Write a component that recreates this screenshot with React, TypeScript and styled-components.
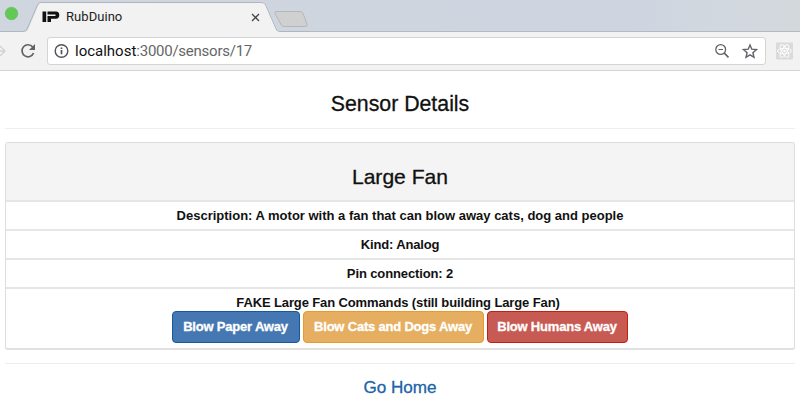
import React from "react";
import styled, { createGlobalStyle } from "styled-components";

const GlobalStyle = createGlobalStyle`
  * { box-sizing: border-box; }
  html, body { margin: 0; background: #fff; }
  body { overflow: hidden; font-family: "Liberation Sans", Arial, sans-serif; color: #111; }
`;

const Window = styled.div`
  width: 800px;
  height: 411px;
  overflow: hidden;
  background: #fff;
`;

const TabStrip = styled.div`
  display: flex;
  height: 32px;
  background: linear-gradient(90deg, #cfd6df 0%, #cfd5e0 80%, #d2d8df 90%, #d2d8dc 100%);
`;

const TabShape = styled.div`
  position: relative;
  width: 310px;
  height: 32px;
`;

const TabOutline = styled.svg`
  position: absolute;
  inset: 0;
`;

const StripLine = styled.div`
  flex: 1;
  border-bottom: 1px solid #b4bac2;
`;

const TabContent = styled.div`
  position: relative;
  display: flex;
  align-items: center;
  height: 34px;
  padding-left: 42px;
`;

const TabTitle = styled.span`
  width: 185px;
  margin-left: 6px;
  font: 13px/18px Roboto, sans-serif;
  letter-spacing: 0.05px;
  color: #222;
`;

const Toolbar = styled.div`
  display: flex;
  align-items: center;
  height: 39px;
  background: #f2f2f2;
  border-bottom: 1px solid #d5d5d5;
`;

const ForwardIcon = styled.svg`
  width: 20px;
  height: 18px;
`;

const Address = styled.div`
  display: flex;
  align-items: center;
  width: 719px;
  height: 28px;
  margin-left: 10px;
  padding: 0 7px 0 6px;
  background: #fff;
  border: 1px solid #d4d4d4;
  border-radius: 3px;
`;

const Url = styled.div`
  flex: 1;
  margin-left: 5px;
  font: 15px/20px Roboto, sans-serif;
  letter-spacing: -0.25px;
  color: #666;
`;

const Host = styled.span`
  letter-spacing: 0;
  color: #111;
`;

const Page = styled.main`
  display: flex;
  flex-direction: column;
  padding: 0 5px;
`;

const Title = styled.h1`
  margin: 0;
  height: 58px;
  padding-top: 20px;
  border-bottom: 1px solid #eee;
  font-size: 21.3px;
  line-height: 26px;
  font-weight: 400;
  text-align: center;
  -webkit-text-stroke: 0.3px #111;
`;

const Panel = styled.section`
  height: 208px;
  margin-top: 13px;
  border: 1px solid #ddd;
  border-bottom: 2px solid #e0e0e0;
  border-radius: 3px;
  overflow: hidden;
`;

const PanelHeading = styled.h2`
  margin: 0;
  height: 57px;
  padding-top: 21px;
  background: #f4f4f4;
  font-size: 21.1px;
  line-height: 26px;
  font-weight: 400;
  text-align: center;
  -webkit-text-stroke: 0.3px #111;
`;

const Row = styled.div<{ $tracking?: number }>`
  height: 29px;
  border-top: 2px solid #e6e6e6;
  font-size: 13px;
  line-height: 27px;
  font-weight: 700;
  letter-spacing: ${({ $tracking = 0 }) => $tracking}px;
  text-align: center;
`;

const Commands = styled(Row)`
  height: 62px;
`;

const CommandTitle = styled.div`
  height: 22px;
  padding-right: 4px;
  letter-spacing: -0.12px;
`;

const Buttons = styled.div`
  display: flex;
  justify-content: center;
  gap: 3px;
  padding-right: 1px;
`;

const Button = styled.button<{ $fill: string; $edge: string; $width: number }>`
  width: ${({ $width }) => $width}px;
  height: 32px;
  padding: 0;
  border: 1px solid ${({ $edge }) => $edge};
  border-radius: 4px;
  background: ${({ $fill }) => $fill};
  color: #fff;
  font: 700 13px/30px "Liberation Sans", Arial, sans-serif;
  letter-spacing: -0.2px;
  white-space: nowrap;
  -webkit-text-stroke: 0.3px #fff;
`;

const Footer = styled.footer`
  margin-top: 13px;
  padding-top: 13px;
  border-top: 1px solid #eee;
  text-align: center;
`;

const HomeLink = styled.a`
  color: #1c63a8;
  font-size: 17.1px;
  line-height: 22px;
  -webkit-text-stroke: 0.3px #1c63a8;
`;

const details = [
  { text: "Description: A motor with a fan that can blow away cats, dog and people", tracking: 0 },
  { text: "Kind: Analog", tracking: -0.15 },
  { text: "Pin connection: 2", tracking: -0.12 },
];

const commands = [
  { label: "Blow Paper Away", fill: "#4578b2", edge: "#145a9c", width: 128 },
  { label: "Blow Cats and Dogs Away", fill: "#e6ae60", edge: "#e89b2b", width: 181 },
  { label: "Blow Humans Away", fill: "#c75a53", edge: "#c4200f", width: 141 },
];

export default function App() {
  return (
    <>
      <GlobalStyle />
      <Window>
        <TabStrip>
          <TabShape>
            <TabOutline width="310" height="32">
              <path d="M0 31.5H23Q26 31.5 27 29L37 6Q38.5 2.5 41 2.5H261Q264 2.5 265.500 5L276 29Q277 31.500 280 31.500H310" fill="none" stroke="#b0b6be" />
              <path d="M24 32Q27 32 28 29.500L38 6Q39 3 41 3H261Q264 3 265 5L276 30Q277 32 280 32Z" fill="#f2f2f2" />
              <circle cx="11.500" cy="13.500" r="6.300" fill="#62c955" stroke="#52b84a" strokeWidth=".5" />
              <path d="M277 11.500H300Q302 11.500 303 13.500L307 24Q308 26.500 305 26.500H284Q282 26.500 281 24.500L275 13.500Q274 11.500 277 11.500Z" fill="#d0d0d0" stroke="#b3b7bd" />
            </TabOutline>
            <TabContent>
              <svg width="18" height="12" viewBox="0 0 18 12">
                <path d="M.5.500h3.700v10.500H.5zM5.500.500h8.500q3.300 0 3.300 3.600T14 7.700H9V11H5.500V5h8V3.500h-8z" fill="#111" />
              </svg>
              <TabTitle>RubDuino</TabTitle>
              <svg width="9" height="9" viewBox="0 0 9 9">
                <path d="m1 1 7 7M8 1 1 8" stroke="#444" strokeWidth="1.300" />
              </svg>
            </TabContent>
          </TabShape>
          <StripLine />
        </TabStrip>
        <Toolbar>
          <ForwardIcon viewBox="0 0 20 18">
            <path d="M0 4l5 5-5 5M0 9h5" fill="none" stroke="#d2d2d2" strokeWidth="1.300" />
          </ForwardIcon>
          <svg width="17" height="18" viewBox="0 0 17 18">
            <path d="M12.700 5A6 6 0 1 0 13.600 11" fill="none" stroke="#606268" strokeWidth="1.700" />
            <path d="M15 2v6H9z" fill="#606268" />
          </svg>
          <Address>
            <svg width="16" height="16" viewBox="0 0 16 16">
              <circle cx="7.500" cy="8" r="6.300" fill="none" stroke="#50535a" strokeWidth="1.400" />
              <path d="M7.500 7v4.200M7.500 4.500V6" stroke="#50535a" strokeWidth="1.700" />
            </svg>
            <Url><Host>localhost</Host>:3000/sensors/17</Url>
            <svg width="43" height="16" viewBox="0 0 43 16">
              <circle cx="5.700" cy="6.500" r="4.900" fill="none" stroke="#606269" strokeWidth="1.300" />
              <path d="M3.500 6.500h4.500" stroke="#606269" />
              <path d="m9.200 10 4.300 4.300" stroke="#606269" strokeWidth="1.700" />
              <path d="m35 2 1.800 4.200 4.700.4-3.600 3.100 1.100 4.600-4-2.400-4 2.400 1.100-4.600-3.600-3.100 4.700-.4z" fill="none" stroke="#606269" strokeWidth="1.400" />
            </svg>
          </Address>
          <svg width="28" height="18" viewBox="0 0 28 18">
            <rect x="10" y=".5" width="17" height="17" rx="1" fill="#dadada" />
            <g fill="none" stroke="#fff" strokeWidth=".9">
              <ellipse cx="18.500" cy="9" rx="7" ry="2.700" />
              <ellipse cx="18.500" cy="9" rx="7" ry="2.700" transform="rotate(60 18.500 9)" />
              <ellipse cx="18.500" cy="9" rx="7" ry="2.700" transform="rotate(120 18.500 9)" />
            </g>
            <circle cx="18.500" cy="9" r="1.300" fill="#fff" />
          </svg>
        </Toolbar>
        <Page>
          <Title>Sensor Details</Title>
          <Panel>
            <PanelHeading>Large Fan</PanelHeading>
            {details.map(({ text, tracking }) => (
              <Row key={text} $tracking={tracking}>{text}</Row>
            ))}
            <Commands>
              <CommandTitle>FAKE Large Fan Commands (still building Large Fan)</CommandTitle>
              <Buttons>
                {commands.map(({ label, fill, edge, width }) => (
                  <Button key={label} $fill={fill} $edge={edge} $width={width}>{label}</Button>
                ))}
              </Buttons>
            </Commands>
          </Panel>
          <Footer>
            <HomeLink>Go Home</HomeLink>
          </Footer>
        </Page>
      </Window>
    </>
  );
}
